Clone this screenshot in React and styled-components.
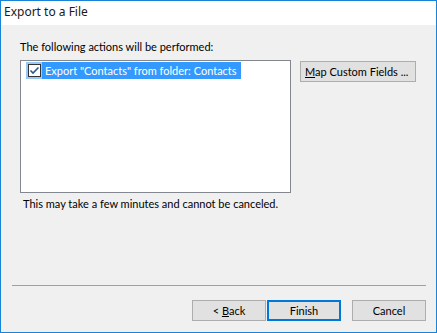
import React from 'react';
import styled, { createGlobalStyle } from 'styled-components';

const Global = createGlobalStyle`
  html, body { margin: 0; padding: 0; background: #fff; }
  * { box-sizing: border-box; }
`;

const Window = styled.div`
  width: 437px;
  height: 333px;
  border: 1px solid #1883d7;
  display: flex;
  flex-direction: column;
  font-family: Lato, "Noto Sans", sans-serif;
  font-size: 11px;
  color: #000;
  background: #f0f0f0;
`;

const TitleBar = styled.div`
  height: 24px;
  background: #fff;
  padding: 3px 0 0 3px;
  line-height: 16px;
  font-family: "Noto Sans", sans-serif;
  font-size: 12px;
  color: #1a1a1a;
`;

const Body = styled.div`
  flex: 1;
  display: flex;
  flex-direction: column;
  padding: 14px 0 11px 0;
`;

const Label = styled.div`
  line-height: 16px;
  padding-left: 19px;
  margin-bottom: 5px;
`;

const Row = styled.div`
  display: flex;
  align-items: flex-start;
  padding-left: 19px;
`;

const ListBox = styled.div`
  width: 271px;
  height: 133px;
  background: #fff;
  border: 1px solid #828790;
  padding: 1px 5px;
`;

const Item = styled.div`
  display: flex;
  align-items: center;
  height: 17px;
  width: 215px;
`;

const CheckZone = styled.div`
  width: 16px;
  height: 17px;
  background: #99c9f7;
  display: flex;
  align-items: center;
  justify-content: center;
`;

const ItemText = styled.div`
  flex: 1;
  height: 17px;
  line-height: 17px;
  background: #3399ff;
  color: #fff;
  padding-left: 3px;
  white-space: nowrap;
`;

const Button = styled.button`
  font-family: inherit;
  font-size: inherit;
  height: 21px;
  width: ${p => p.$w || 74}px;
  background: #e1e1e1;
  border: ${p => (p.$default ? '2px solid #0078d7' : '1px solid #adadad')};
  color: #000;
  padding: 0;
  line-height: 16px;
  white-space: nowrap;
  text-align: ${p => (p.$left ? 'left' : 'center')};
  padding-left: ${p => (p.$left ? '4px' : '0')};
  u { text-decoration: underline; }
`;

const SideButton = styled(Button)`
  margin-left: 9px;
  margin-top: 1px;
`;

const Note = styled.div`
  line-height: 16px;
  padding-left: 22px;
  margin-top: 3px;
`;

const Separator = styled.div`
  margin: auto 10px 0 11px;
  height: 1px;
  background: #a0a0a0;
`;

const Buttons = styled.div`
  display: flex;
  justify-content: flex-end;
  gap: 1px;
  padding-right: 10px;
  margin-top: 14px;
`;

const CheckBox = () => (
  <svg width="13" height="13" viewBox="0 0 13 13">
    <rect x="0.5" y="0.5" width="12" height="12" fill="#fff" stroke="#333" />
    <path d="M2.5 6.5 L5 9 L10.5 3.5" fill="none" stroke="#2b5797" strokeWidth="1.6" />
  </svg>
);

export default function App() {
  return (
    <>
      <Global />
      <Window>
        <TitleBar>Export to a File</TitleBar>
        <Body>
          <Label>The following actions will be performed:</Label>
          <Row>
            <ListBox>
              <Item>
                <CheckZone><CheckBox /></CheckZone>
                <ItemText>Export "Contacts" from folder: Contacts</ItemText>
              </Item>
            </ListBox>
            <SideButton $w={116} $left><u>M</u>ap Custom Fields ...</SideButton>
          </Row>
          <Note>This may take a few minutes and cannot be canceled.</Note>
          <Separator />
          <Buttons>
            <Button>&lt; <u>B</u>ack</Button>
            <Button $default>Finish</Button>
            <Button style={{ marginLeft: 10 }}>Cancel</Button>
          </Buttons>
        </Body>
      </Window>
    </>
  );
}
